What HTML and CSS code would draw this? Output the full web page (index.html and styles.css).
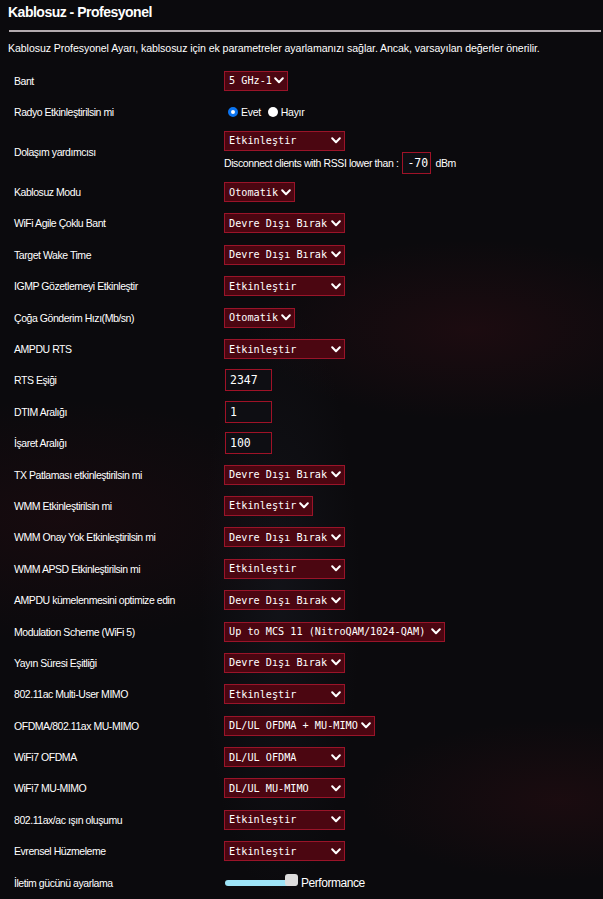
FILE: index.html
```html
<!DOCTYPE html>
<html lang="tr">
<head>
<meta charset="utf-8">
<title>Kablosuz - Profesyonel</title>
<link rel="stylesheet" href="styles.css">
</head>
<body>
<div class="page">
  <h1 class="title">Kablosuz - Profesyonel</h1>
  <div class="rule"></div>
  <p class="desc">Kablosuz Profesyonel Ayarı, kablsosuz için ek parametreler ayarlamanızı sağlar. Ancak, varsayılan değerler önerilir.</p>

  <div class="form">
    <div class="row"><div class="label">Bant</div><div class="ctrl"><span class="sel w64"><span>5 GHz-1</span><svg class="chev" viewBox="0 0 10 7"><path d="M1.2 1.3 L5 5.2 L8.8 1.3"/></svg></span></div></div>
    <div class="row"><div class="label">Radyo Etkinleştirilsin mi</div><div class="ctrl radios"><span class="radio on"></span><span class="rlabel">Evet</span><span class="radio"></span><span class="rlabel">Hayır</span></div></div>
    <div class="row tall"><div class="label">Dolaşım yardımcısı</div><div class="ctrl stack">
      <span class="sel w121"><span>Etkinleştir</span><svg class="chev" viewBox="0 0 10 7"><path d="M1.2 1.3 L5 5.2 L8.8 1.3"/></svg></span>
      <div class="rssi"><span>Disconnect clients with RSSI lower than :</span><span class="inp small">-70</span><span>dBm</span></div>
    </div></div>
    <div class="row"><div class="label">Kablosuz Modu</div><div class="ctrl"><span class="sel w71"><span>Otomatik</span><svg class="chev" viewBox="0 0 10 7"><path d="M1.2 1.3 L5 5.2 L8.8 1.3"/></svg></span></div></div>
    <div class="row"><div class="label">WiFi Agile Çoklu Bant</div><div class="ctrl"><span class="sel w121"><span>Devre Dışı Bırak</span><svg class="chev" viewBox="0 0 10 7"><path d="M1.2 1.3 L5 5.2 L8.8 1.3"/></svg></span></div></div>
    <div class="row"><div class="label">Target Wake Time</div><div class="ctrl"><span class="sel w121"><span>Devre Dışı Bırak</span><svg class="chev" viewBox="0 0 10 7"><path d="M1.2 1.3 L5 5.2 L8.8 1.3"/></svg></span></div></div>
    <div class="row"><div class="label">IGMP Gözetlemeyi Etkinleştir</div><div class="ctrl"><span class="sel w121"><span>Etkinleştir</span><svg class="chev" viewBox="0 0 10 7"><path d="M1.2 1.3 L5 5.2 L8.8 1.3"/></svg></span></div></div>
    <div class="row"><div class="label">Çoğa Gönderim Hızı(Mb/sn)</div><div class="ctrl"><span class="sel w71"><span>Otomatik</span><svg class="chev" viewBox="0 0 10 7"><path d="M1.2 1.3 L5 5.2 L8.8 1.3"/></svg></span></div></div>
    <div class="row"><div class="label">AMPDU RTS</div><div class="ctrl"><span class="sel w121"><span>Etkinleştir</span><svg class="chev" viewBox="0 0 10 7"><path d="M1.2 1.3 L5 5.2 L8.8 1.3"/></svg></span></div></div>
    <div class="row"><div class="label">RTS Eşiği</div><div class="ctrl"><span class="inp">2347</span></div></div>
    <div class="row"><div class="label">DTIM Aralığı</div><div class="ctrl"><span class="inp">1</span></div></div>
    <div class="row"><div class="label">İşaret Aralığı</div><div class="ctrl"><span class="inp">100</span></div></div>
    <div class="row"><div class="label">TX Patlaması etkinleştirilsin mi</div><div class="ctrl"><span class="sel w121"><span>Devre Dışı Bırak</span><svg class="chev" viewBox="0 0 10 7"><path d="M1.2 1.3 L5 5.2 L8.8 1.3"/></svg></span></div></div>
    <div class="row"><div class="label">WMM Etkinleştirilsin mi</div><div class="ctrl"><span class="sel w89"><span>Etkinleştir</span><svg class="chev" viewBox="0 0 10 7"><path d="M1.2 1.3 L5 5.2 L8.8 1.3"/></svg></span></div></div>
    <div class="row"><div class="label">WMM Onay Yok Etkinleştirilsin mi</div><div class="ctrl"><span class="sel w121"><span>Devre Dışı Bırak</span><svg class="chev" viewBox="0 0 10 7"><path d="M1.2 1.3 L5 5.2 L8.8 1.3"/></svg></span></div></div>
    <div class="row"><div class="label">WMM APSD Etkinleştirilsin mi</div><div class="ctrl"><span class="sel w121"><span>Etkinleştir</span><svg class="chev" viewBox="0 0 10 7"><path d="M1.2 1.3 L5 5.2 L8.8 1.3"/></svg></span></div></div>
    <div class="row"><div class="label">AMPDU kümelenmesini optimize edin</div><div class="ctrl"><span class="sel w121"><span>Devre Dışı Bırak</span><svg class="chev" viewBox="0 0 10 7"><path d="M1.2 1.3 L5 5.2 L8.8 1.3"/></svg></span></div></div>
    <div class="row"><div class="label">Modulation Scheme (WiFi 5)</div><div class="ctrl"><span class="sel w221"><span>Up to MCS 11 (NitroQAM/1024-QAM)</span><svg class="chev" viewBox="0 0 10 7"><path d="M1.2 1.3 L5 5.2 L8.8 1.3"/></svg></span></div></div>
    <div class="row"><div class="label">Yayın Süresi Eşitliği</div><div class="ctrl"><span class="sel w121"><span>Devre Dışı Bırak</span><svg class="chev" viewBox="0 0 10 7"><path d="M1.2 1.3 L5 5.2 L8.8 1.3"/></svg></span></div></div>
    <div class="row"><div class="label">802.11ac Multi-User MIMO</div><div class="ctrl"><span class="sel w121"><span>Etkinleştir</span><svg class="chev" viewBox="0 0 10 7"><path d="M1.2 1.3 L5 5.2 L8.8 1.3"/></svg></span></div></div>
    <div class="row"><div class="label">OFDMA/802.11ax MU-MIMO</div><div class="ctrl"><span class="sel w151"><span>DL/UL OFDMA + MU-MIMO</span><svg class="chev" viewBox="0 0 10 7"><path d="M1.2 1.3 L5 5.2 L8.8 1.3"/></svg></span></div></div>
    <div class="row"><div class="label">WiFi7 OFDMA</div><div class="ctrl"><span class="sel w121"><span>DL/UL OFDMA</span><svg class="chev" viewBox="0 0 10 7"><path d="M1.2 1.3 L5 5.2 L8.8 1.3"/></svg></span></div></div>
    <div class="row"><div class="label">WiFi7 MU-MIMO</div><div class="ctrl"><span class="sel w121"><span>DL/UL MU-MIMO</span><svg class="chev" viewBox="0 0 10 7"><path d="M1.2 1.3 L5 5.2 L8.8 1.3"/></svg></span></div></div>
    <div class="row"><div class="label">802.11ax/ac ışın oluşumu</div><div class="ctrl"><span class="sel w121"><span>Etkinleştir</span><svg class="chev" viewBox="0 0 10 7"><path d="M1.2 1.3 L5 5.2 L8.8 1.3"/></svg></span></div></div>
    <div class="row"><div class="label">Evrensel Hüzmeleme</div><div class="ctrl"><span class="sel w121"><span>Etkinleştir</span><svg class="chev" viewBox="0 0 10 7"><path d="M1.2 1.3 L5 5.2 L8.8 1.3"/></svg></span></div></div>
    <div class="row"><div class="label">İletim gücünü ayarlama</div><div class="ctrl slider-wrap"><span class="slider"><span class="thumb"></span></span><span class="perf">Performance</span></div></div>
  </div>
</div>
</body>
</html>
```

FILE: styles.css
```css
html, body {
  margin: 0;
  padding: 0;
}
body {
  width: 603px;
  height: 899px;
  overflow: hidden;
  color: #fff;
  font-family: "Liberation Sans", Arial, sans-serif;
  background-color: #0b0a0d;
  background-image:
    radial-gradient(ellipse 220px 90px at 470px 330px, rgba(60, 14, 22, 0.35), transparent),
    radial-gradient(ellipse 260px 120px at 60px 520px, rgba(50, 12, 18, 0.3), transparent),
    radial-gradient(ellipse 200px 80px at 560px 800px, rgba(55, 14, 20, 0.35), transparent),
    radial-gradient(ellipse 80px 300px at 280px 600px, rgba(30, 34, 44, 0.35), transparent);
}
.page {
  padding: 0 2px 0 8px;
}
.title {
  margin: 0;
  padding-top: 3px;
  height: 23px;
  font-size: 14px;
  font-weight: bold;
  letter-spacing: -0.5px;
  line-height: 19px;
}
.rule {
  height: 2px;
  margin-left: 1px;
  margin-top: 4px;
  background: #b3abaf;
}
.desc {
  margin: 0;
  padding-top: 10px;
  height: 22px;
  font-size: 10.6px;
  letter-spacing: -0.08px;
  line-height: 13px;
}
.form {
  padding-top: 1px;
}
.row {
  display: grid;
  grid-template-columns: 216px auto;
  align-items: center;
  height: 31.4px;
}
.row.tall {
  height: 48.6px;
}
.label {
  padding-left: 6px;
  font-size: 10.5px;
  letter-spacing: -0.45px;
}
.ctrl {
  display: flex;
  align-items: center;
}
.sel {
  box-sizing: border-box;
  display: inline-flex;
  align-items: center;
  justify-content: space-between;
  height: 20px;
  padding: 0 3px 0 4px;
  border: 1px solid #9a1429;
  background: #4b0611;
  font-family: "DejaVu Sans Mono", "Liberation Mono", monospace;
  font-size: 10.2px;
  white-space: pre;
}
.w64 { width: 64px; }
.w71 { width: 71px; }
.w89 { width: 89px; }
.w121 { width: 121px; }
.w151 { width: 151px; }
.w221 { width: 221px; }
.chev {
  width: 10px;
  height: 7px;
  flex: none;
}
.chev path {
  fill: none;
  stroke: #fff;
  stroke-width: 2;
  stroke-linecap: round;
  stroke-linejoin: round;
}
.inp {
  box-sizing: border-box;
  display: inline-flex;
  align-items: center;
  width: 47px;
  height: 22px;
  margin-left: 1px;
  padding-left: 4px;
  border: 1px solid #9f1227;
  background: #0e0e13;
  font-family: "DejaVu Sans Mono", "Liberation Mono", monospace;
  font-size: 11.5px;
}
.radios {
  font-size: 10.5px;
  letter-spacing: -0.3px;
}
.radio {
  box-sizing: border-box;
  width: 10px;
  height: 10px;
  border-radius: 50%;
  background: #fff;
  margin-left: 5px;
  margin-right: 3px;
}
.radio.on {
  margin-left: 4px;
  border: 3px solid #0b74f0;
  background: #fff;
}
.rlabel {
  margin-right: 2px;
}
.stack {
  flex-direction: column;
  align-items: flex-start;
  gap: 1px;
  padding-top: 0;
}
.rssi {
  display: flex;
  align-items: center;
  font-size: 10.5px;
  letter-spacing: -0.4px;
  gap: 4px;
}
.inp.small {
  width: 29px;
  height: 22px;
  margin-left: 0;
  letter-spacing: 0;
}
.slider-wrap {
  gap: 4px;
}
.slider {
  position: relative;
  width: 72px;
  height: 6px;
  margin-left: 1px;
  border-radius: 3px;
  background: #9ee4f7;
}
.thumb {
  position: absolute;
  right: -1px;
  top: -6px;
  width: 13px;
  height: 12px;
  border-radius: 3px;
  background: #dddddd;
}
.perf {
  font-size: 12px;
  letter-spacing: -0.45px;
}
```
